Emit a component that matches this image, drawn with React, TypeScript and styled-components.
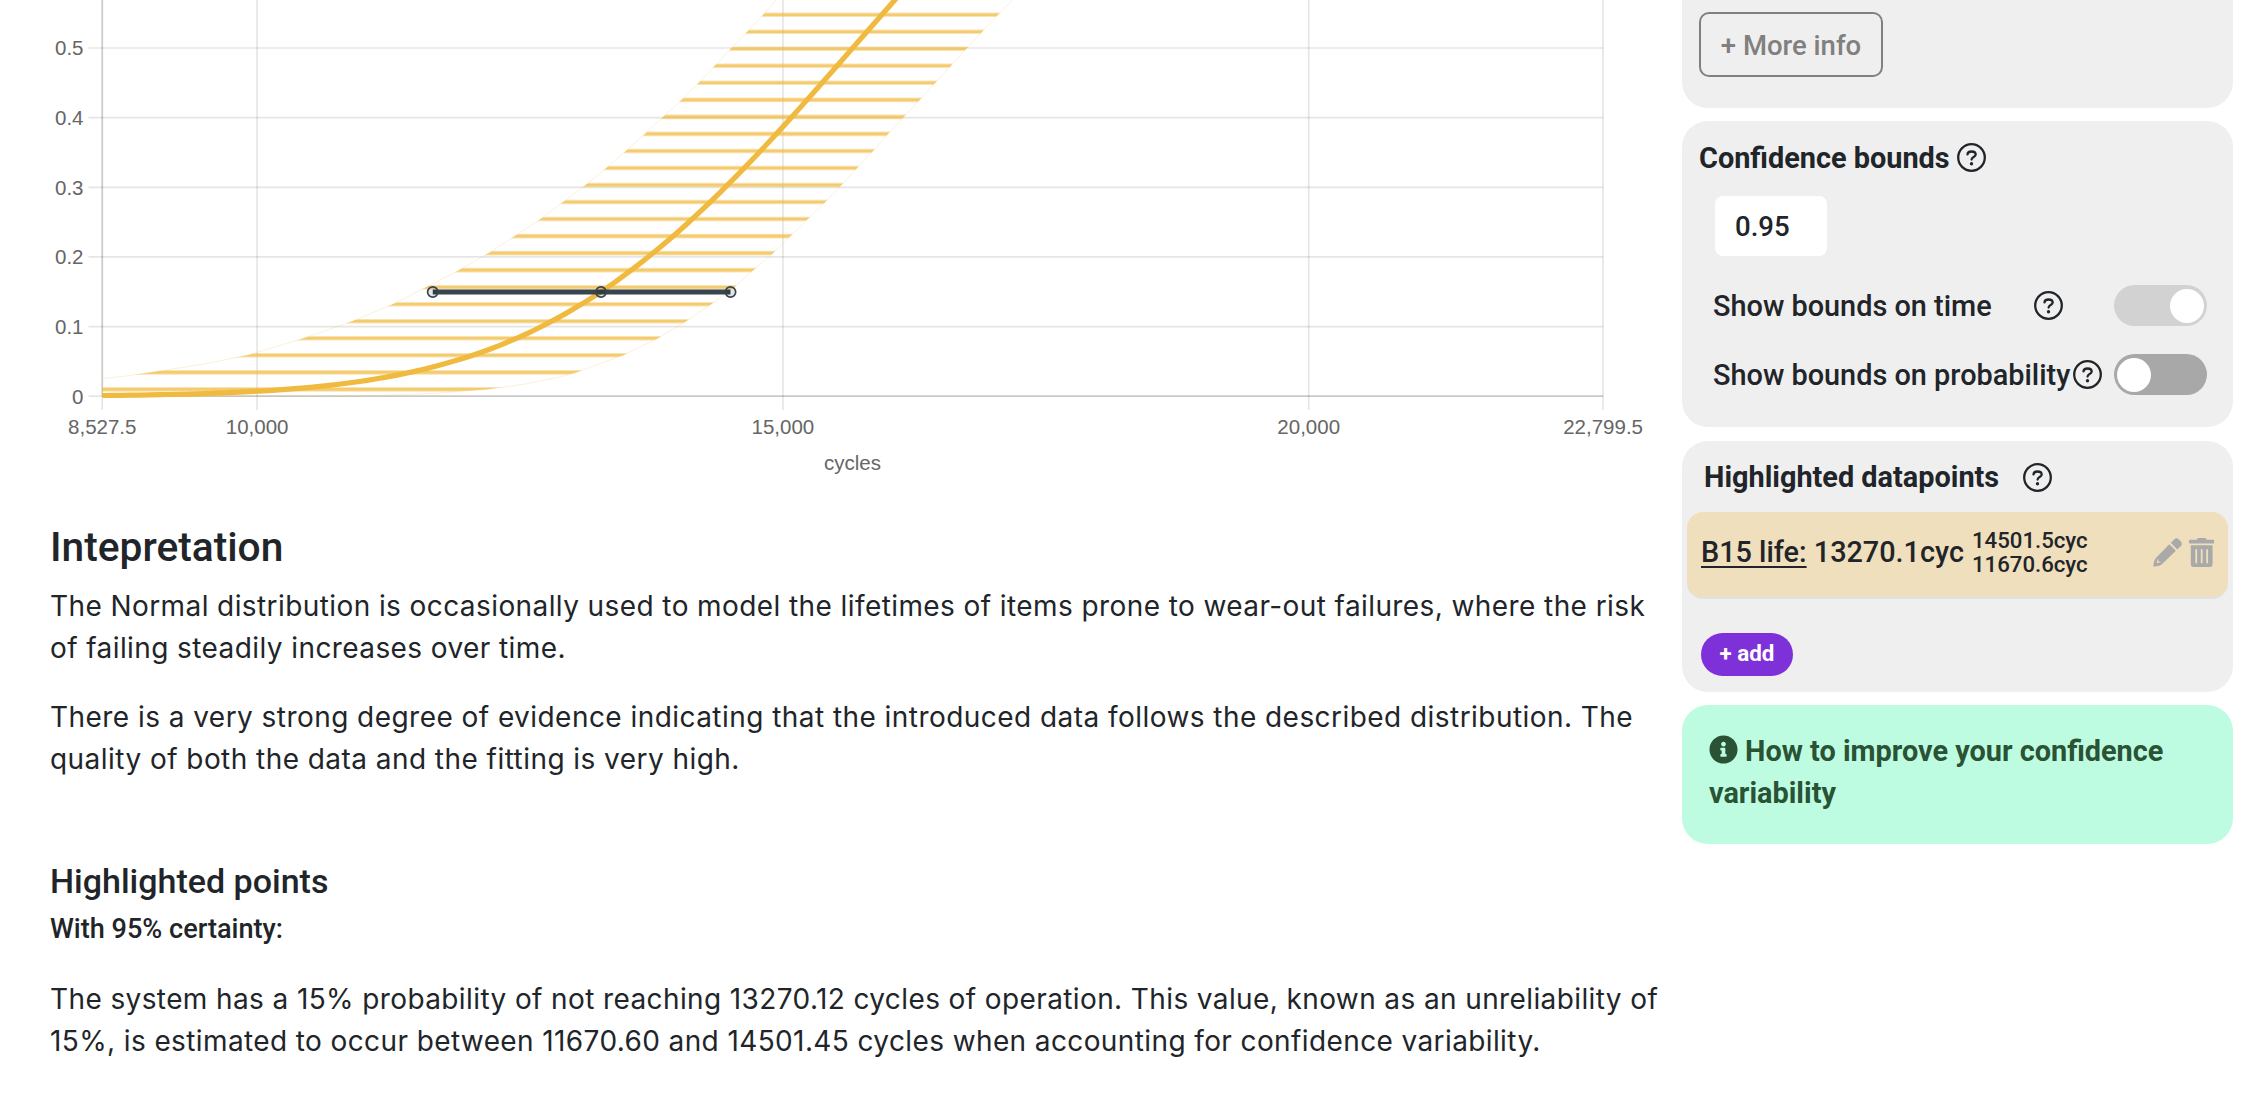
import React from 'react';
import styled, { createGlobalStyle } from 'styled-components';
import { FaInfoCircle, FaTrashAlt } from 'react-icons/fa';

const colors = {
    text: '#212529',
    panel: '#efefef',
    axis: '#666666',
    series: '#f0ba40',
    highlight: '#37454e',
    purple: '#7e30d9',
    icon: '#a9a9a9',
}

const fonts = {
    body: 'Inter, "Liberation Sans", sans-serif',
    ui: 'Roboto, "Liberation Sans", sans-serif',
    chart: '"Liberation Sans", Arial, sans-serif',
}

const GlobalStyle = createGlobalStyle`
    * {
        box-sizing: border-box;
    }

    body {
        margin: 0;
        background-color: white;
        color: ${colors.text};
        font-family: ${fonts.ui};
        overflow: hidden;
    }
`

const Page = styled.div`
    display: flex;
    width: 2268px;
    height: 1094px;
    overflow: hidden;
`

const Main = styled.main`
    width: 1682px;
    flex-shrink: 0;
`

const ChartSvg = styled.svg`
    display: block;

    text {
        font-family: ${fonts.chart};
        font-size: 20.5px;
        fill: ${colors.axis};
    }
`

const Report = styled.section`
    padding: 23px 0 0 50px;
`

const Title = styled.h3`
    margin: 0;
    font-size: 40.7px;
    font-weight: 500;
    line-height: 48px;
`

const Subtitle = styled.h4`
    margin: 81px 0 0;
    font-size: 34px;
    font-weight: 500;
    line-height: 40px;
`

const Certainty = styled.h5`
    margin: 12px 0 0;
    font-size: 27.1px;
    font-weight: 500;
    line-height: 32px;
`

const Paragraph = styled.p<{ top: number, spacing: number }>`
    margin: ${props => props.top}px 0 0;
    font-family: ${fonts.body};
    font-size: 28px;
    line-height: 42px;
    letter-spacing: ${props => props.spacing}px;
    white-space: nowrap;
`

const Sidebar = styled.aside`
    width: 551px;
    display: flex;
    flex-direction: column;
    gap: 13.5px;
`

const Panel = styled.section<{ height: number }>`
    height: ${props => props.height}px;
    flex-shrink: 0;
    background-color: ${colors.panel};
    border-radius: 26px;
`

const TopPanel = styled(Panel)`
    border-radius: 0 0 26px 26px;
    padding: 12px 17px;
`

const InfoButton = styled.button`
    width: 184px;
    height: 65px;
    padding: 2px 0 0;
    border: 2px solid #808080;
    border-radius: 10px;
    background: none;
    color: #808080;
    font-family: ${fonts.ui};
    font-size: 27.5px;
    font-weight: 500;
`

const PanelTitle = styled.div<{ inset?: number, gap: number }>`
    display: flex;
    align-items: center;
    gap: ${props => props.gap}px;
    height: 71.5px;
    padding-top: 1.5px;
    padding-left: ${props => props.inset ?? 17}px;
    font-size: 28.87px;
    font-weight: 700;
`

const BoundsInput = styled.input`
    display: block;
    width: 112px;
    height: 60px;
    margin: 3.5px 0 0 33px;
    padding: 0 0 0 20px;
    border: none;
    border-radius: 8px;
    background-color: white;
    color: ${colors.text};
    font-family: ${fonts.ui};
    font-size: 27.6px;
    font-weight: 500;
`

const ToggleRow = styled.div<{ top: number }>`
    display: flex;
    align-items: center;
    height: 42px;
    margin-top: ${props => props.top}px;
    padding: 0 26px 0 31px;
    font-size: 28.87px;
    font-weight: 500;
`

const ToggleHelp = styled.span<{ left: number }>`
    display: flex;
    margin-left: ${props => props.left}px;
`

const Toggle = styled.span<{ on?: boolean }>`
    display: flex;
    align-items: center;
    justify-content: ${props => props.on ? "flex-end" : "flex-start"};
    width: 93px;
    height: 41px;
    margin-left: auto;
    padding: 3px;
    border-radius: 21px;
    background-color: ${props => props.on ? "#d2d2d2" : "#a8a8a8"};

    &::after {
        content: "";
        width: 34px;
        height: 34px;
        border-radius: 50%;
        background-color: white;
    }
`

const Datapoint = styled.div`
    display: flex;
    align-items: center;
    height: 87px;
    margin: 0 5px;
    padding: 0 14px 5px;
    border-bottom: 2px solid #dee2e6;
    border-radius: 16px;
    background-color: #f0dfbc;
    font-size: 28.8px;
    font-weight: 500;
    white-space: pre;
`

const DatapointName = styled.span`
    text-decoration: underline;
    text-decoration-thickness: 2px;
    text-underline-offset: 4px;
`

const Interval = styled.span`
    margin-left: 8px;
    font-size: 22.2px;
    line-height: 24px;
`

const Actions = styled.span`
    display: flex;
    align-items: center;
    gap: 7px;
    margin-left: auto;
    color: ${colors.icon};
`

const TrashIcon = styled(FaTrashAlt)`
    width: 25.4px;
    height: 29px;
`

const AddButton = styled.button`
    display: block;
    width: 92px;
    height: 43px;
    margin: 33.5px 0 0 19px;
    padding: 0 0 3px;
    border: none;
    border-radius: 22px;
    background-color: ${colors.purple};
    color: white;
    font-family: ${fonts.ui};
    font-size: 22.4px;
    font-weight: 700;
`

const Tip = styled(Panel)`
    padding: 25px 27px;
    background-color: #bdfce1;
    color: #2a5234;
    font-size: 28.87px;
    font-weight: 700;
    line-height: 42px;

    svg {
        vertical-align: -3px;
        margin-right: 7px;
    }
`

function HelpIcon() {
    return (
        <svg width="29" height="29" viewBox="0 0 29 29" fill="none" stroke={colors.text} strokeWidth="2.3" strokeLinecap="round">
            <circle cx="14.5" cy="14.5" r="13.3"/>
            <path d="M10.5 11.4c.1-1.8 1.7-2.9 4-2.9 2.4 0 4.2 1.2 4.2 3.1 0 2.5-4.1 2.5-4.1 5"/>
            <circle cx="14.5" cy="20.8" r="1.7" fill={colors.text} stroke="none"/>
        </svg>
    );
}

function PencilIcon() {
    return (
        <svg width="29" height="29" viewBox="0 0 29 29" fill="currentColor" fillRule="evenodd">
            <path d="M17.9 4.7l3.3-3.3a3.4 3.4 0 0 1 4.6 0l2 2a3.4 3.4 0 0 1 0 4.6l-3.500 3.400z"/>
            <path d="M16.400 6.200l6.500 6.600L8.600 26.600C7.400 27.600 3.400 28.600.4 28.700c0-3 .9-6.900 2-8.200zM4.900 20.200l-1.300 5 5-1.200-3-.600z"/>
        </svg>
    );
}

const X_MIN = 8527.5;
const X_MAX = 22799.5;
const MEAN = 15663.5;
const SD = 2309.3;

const toX = (cycles: number) => 257.1 + (cycles - 10000) * 0.10516;
const toY = (p: number) => 396.2 - p * 696.4;

// Abramowitz-Stegun approximation of the normal CDF
function normalCdf(value: number) {
    const z = (value - MEAN) / SD;
    const t = 1 / (1 + 0.2316419 * Math.abs(z));
    const tail = 0.3989423 * Math.exp(-z * z / 2) *
        t * (0.3193815 + t * (-0.3565638 + t * (1.781478 + t * (-1.821256 + t * 1.330274))));
    return z > 0 ? 1 - tail : tail;
}

const upperBound = [
    [102, 378.7], [128, 375.8], [153.6, 372], [201, 364.5], [248.6, 355], [302.9, 338.5], [351.8, 321.5],
    [392.9, 304.3], [425.7, 287.5], [458.9, 270.3], [488.6, 253.2], [514.6, 236.2],
    [540.4, 219.2], [562.9, 202.2], [585.7, 185.1], [606.4, 168], [626, 151], [645, 134],
    [663.2, 117], [681.4, 100], [698.6, 83], [714.6, 66], [730.7, 49], [747, 32], [763.3, 14.8], [776, 0],
];

const lowerBound = [
    [1012, 0], [997.9, 14.8], [981.8, 32], [966, 49], [950.7, 66], [935, 83], [919.6, 100], [903.6, 117],
    [888, 134], [872.9, 151], [857, 168], [841.4, 185.1], [825, 202.2], [807.5, 219.2], [790.4, 236.2],
    [772.9, 253.2], [753.2, 270.3], [733.9, 287.5], [711, 304.3], [685.7, 321.5], [657.5, 338.5],
    [623.6, 355], [576, 372.5], [560, 377], [525, 384], [487.5, 389.3], [428.6, 393.8], [360, 396], [102, 396.5],
];

const toPoints = (points: number[][]) => points.map(p => p.join(',')).join(' ');

const curve = Array.from({ length: 90 }, (_, i) => {
    const cycles = X_MIN + i * 90;
    return [toX(cycles), toY(normalCdf(cycles))];
});

const stripes = Array.from({ length: 23 }, (_, i) => 14.7 + i * 17.03);

function Chart() {
    return (
        <ChartSvg width="1682" height="500" viewBox="0 0 1682 500">
            <defs>
                <clipPath id="band">
                    <polygon points={toPoints([...upperBound, ...lowerBound])}/>
                </clipPath>
            </defs>

            {[0, 0.1, 0.2, 0.3, 0.4, 0.5].map(p => (
                <g key={p}>
                    <line x1="88.5" x2={toX(X_MAX)} y1={toY(p)} y2={toY(p)} stroke="#000" strokeOpacity="0.1" strokeWidth="1.7"/>
                    <text x="83.5" y={toY(p) + 7.4} textAnchor="end">{p}</text>
                </g>
            ))}
            {[X_MIN, 10000, 15000, 20000, X_MAX].map(x => (
                <g key={x}>
                    <line x1={toX(x)} x2={toX(x)} y1="0" y2="410" stroke="#000" strokeOpacity="0.1" strokeWidth="1.7"/>
                    <text x={toX(x)} y="434" textAnchor="middle">{x.toLocaleString('en-US')}</text>
                </g>
            ))}
            <line x1={toX(X_MIN)} x2={toX(X_MIN)} y1="0" y2="396" stroke="#000" strokeOpacity="0.12" strokeWidth="1.7"/>
            <line x1={toX(X_MIN)} x2={toX(X_MAX)} y1="396.2" y2="396.2" stroke="#000" strokeOpacity="0.12" strokeWidth="1.7"/>
            <text x="852.5" y="470" textAnchor="middle">cycles</text>

            <g clipPath="url(#band)">
                {stripes.map(y => (
                    <g key={y} stroke={colors.series}>
                        <line x1="102" x2="1020" y1={y} y2={y} strokeWidth="4.6" strokeOpacity="0.4"/>
                        <line x1="102" x2="1020" y1={y} y2={y} strokeWidth="2.6" strokeOpacity="0.6"/>
                    </g>
                ))}
            </g>
            <polyline points={toPoints(upperBound)} fill="none" stroke={colors.series} strokeOpacity="0.2" strokeWidth="1"/>
            <polyline points={toPoints(lowerBound)} fill="none" stroke={colors.series} strokeOpacity="0.2" strokeWidth="1"/>
            <polyline points={toPoints(curve)} fill="none" stroke={colors.series} strokeWidth="5.2"/>

            <line x1={toX(11670.6)} x2={toX(14501.45)} y1="292" y2="292" stroke={colors.highlight} strokeWidth="5.2"/>
            {[11670.6, 13270.12, 14501.45].map(x => (
                <circle key={x} cx={toX(x)} cy="292" r="5.2" fill="#000" fillOpacity="0.1" stroke={colors.highlight} strokeWidth="1.7"/>
            ))}
        </ChartSvg>
    );
}

function App() {
    const [bounds, setBounds] = React.useState("0.95");

    return (
        <Page>
            <GlobalStyle/>
            <Main>
                <Chart/>
                <Report>
                    <Title>Intepretation</Title>
                    <Paragraph top={14} spacing={0.41}>
                        The Normal distribution is occasionally used to model the lifetimes of items prone to wear-out failures, where the risk
                        <br/>
                        of failing steadily increases over time.
                    </Paragraph>
                    <Paragraph top={27} spacing={0.45}>
                        There is a very strong degree of evidence indicating that the introduced data follows the described distribution. The
                        <br/>
                        quality of both the data and the fitting is very high.
                    </Paragraph>
                    <Subtitle>Highlighted points</Subtitle>
                    <Certainty>With 95% certainty:</Certainty>
                    <Paragraph top={33} spacing={0.39}>
                        The system has a 15% probability of not reaching 13270.12 cycles of operation. This value, known as an unreliability of
                        <br/>
                        15%, is estimated to occur between 11670.60 and 14501.45 cycles when accounting for confidence variability.
                    </Paragraph>
                </Report>
            </Main>
            <Sidebar>
                <TopPanel height={107.5}>
                    <InfoButton>+ More info</InfoButton>
                </TopPanel>
                <Panel height={306}>
                    <PanelTitle gap={7}>Confidence bounds <HelpIcon/></PanelTitle>
                    <BoundsInput value={bounds} onChange={e => {setBounds(e.target.value)}}/>
                    <ToggleRow top={28.5}>
                        Show bounds on time
                        <ToggleHelp left={42}><HelpIcon/></ToggleHelp>
                        <Toggle on/>
                    </ToggleRow>
                    <ToggleRow top={27}>
                        Show bounds on probability
                        <ToggleHelp left={3}><HelpIcon/></ToggleHelp>
                        <Toggle/>
                    </ToggleRow>
                </Panel>
                <Panel height={251}>
                    <PanelTitle inset={22} gap={24}>Highlighted datapoints <HelpIcon/></PanelTitle>
                    <Datapoint>
                        <DatapointName>B15 life:</DatapointName> 13270.1cyc
                        <Interval>14501.5cyc<br/>11670.6cyc</Interval>
                        <Actions>
                            <PencilIcon/>
                            <TrashIcon/>
                        </Actions>
                    </Datapoint>
                    <AddButton>+ add</AddButton>
                </Panel>
                <Tip height={139}>
                    <FaInfoCircle size={29}/>
                    How to improve your confidence variability
                </Tip>
            </Sidebar>
        </Page>
    );
}

export default App;
